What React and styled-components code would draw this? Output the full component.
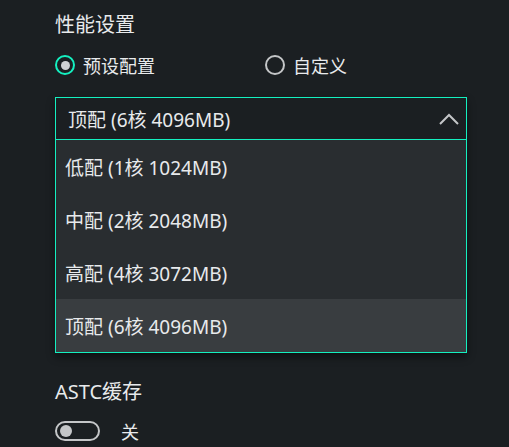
import React, { useState } from 'react';
import styled, { createGlobalStyle } from 'styled-components';

const GlobalStyle = createGlobalStyle`
    html, body {
        margin: 0;
        padding: 0;
        background: #1b1f22;
    }
    body {
        font-family: "Noto Sans", "Noto Sans CJK SC", sans-serif;
        color: #e8eaec;
    }
`;

const Panel = styled.div`
    width: 509px;
    height: 447px;
    padding: 11px 0 0 55px;
    box-sizing: border-box;
    overflow: hidden;
`;

const SectionTitle = styled.div`
    font-size: 20px;
    line-height: 27px;
    margin-bottom: 14px;
`;

const RadioRow = styled.div`
    display: flex;
    align-items: center;
    height: 26px;
    margin-bottom: 19px;
`;

const RadioOption = styled.label`
    display: flex;
    align-items: center;
    gap: 8px;
    width: ${p => p.$width || 'auto'};
    font-size: 18px;
    cursor: pointer;
`;

const RadioCircle = styled.span`
    width: 20px;
    height: 20px;
    box-sizing: border-box;
    border-radius: 50%;
    border: 2.5px solid ${p => (p.$checked ? '#14f0c0' : '#c4c6c8')};
    display: flex;
    align-items: center;
    justify-content: center;

    &::after {
        content: '';
        display: ${p => (p.$checked ? 'block' : 'none')};
        width: 9px;
        height: 9px;
        border-radius: 50%;
        background: #d0d2d4;
    }
`;

const Select = styled.div`
    width: 412px;
    border: 1px solid #14f0c0;
    box-sizing: border-box;
    box-shadow: 0 4px 8px rgba(0, 0, 0, 0.45);
`;

const SelectHead = styled.div`
    display: flex;
    align-items: center;
    justify-content: space-between;
    height: 41px;
    padding: 0 5px 0 12px;
    font-size: 19px;
    border-bottom: 1px solid #14f0c0;
`;

const OptionList = styled.div`
    display: flex;
    flex-direction: column;
    background: #292d30;
`;

const OptionItem = styled.div`
    height: 53px;
    display: flex;
    align-items: center;
    padding-left: 9px;
    font-size: 19px;
    background: ${p => (p.$active ? '#393d40' : 'transparent')};
`;

const SubTitle = styled.div`
    font-size: 20px;
    line-height: 27px;
    margin-top: 25px;
    margin-bottom: 13px;
`;

const ToggleRow = styled.div`
    display: flex;
    align-items: center;
    gap: 21px;
    font-size: 18px;
`;

const Toggle = styled.span`
    width: 45px;
    height: 20px;
    box-sizing: border-box;
    border: 2px solid #c4c6c8;
    border-radius: 10px;
    display: flex;
    align-items: center;
    padding-left: 3px;

    &::before {
        content: '';
        width: 12px;
        height: 12px;
        border-radius: 50%;
        background: #c4c6c8;
    }
`;

const Chevron = () => (
    <svg width="24" height="14" viewBox="0 0 24 14">
        <path d="M3 12 L12 3 L21 12" fill="none" stroke="#c4c6c8" strokeWidth="2" />
    </svg>
);

const presets = ['低配 (1核 1024MB)', '中配 (2核 2048MB)', '高配 (4核 3072MB)', '顶配 (6核 4096MB)'];

const App = () => {
    const [mode, setMode] = useState('preset');
    const [selected, setSelected] = useState(3);

    return (
        <Panel>
            <GlobalStyle />
            <SectionTitle>性能设置</SectionTitle>
            <RadioRow>
                <RadioOption $width="210px" onClick={() => setMode('preset')}>
                    <RadioCircle $checked={mode === 'preset'} />
                    预设配置
                </RadioOption>
                <RadioOption onClick={() => setMode('custom')}>
                    <RadioCircle $checked={mode === 'custom'} />
                    自定义
                </RadioOption>
            </RadioRow>
            <Select>
                <SelectHead>
                    <span>{presets[selected]}</span>
                    <Chevron />
                </SelectHead>
                <OptionList>
                    {presets.map((p, i) => (
                        <OptionItem key={p} $active={i === selected} onClick={() => setSelected(i)}>
                            {p}
                        </OptionItem>
                    ))}
                </OptionList>
            </Select>
            <SubTitle>ASTC缓存</SubTitle>
            <ToggleRow>
                <Toggle />
                关
            </ToggleRow>
        </Panel>
    );
};

export default App;
